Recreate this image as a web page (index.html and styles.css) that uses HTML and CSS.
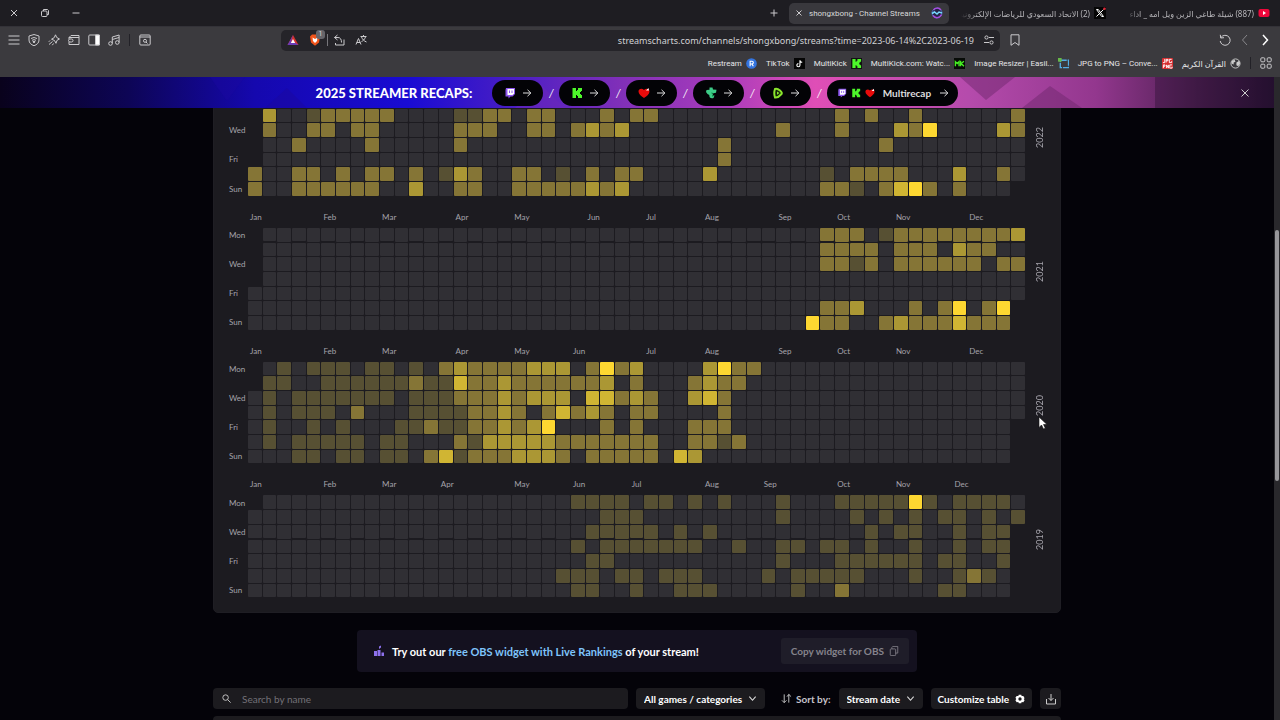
FILE: index.html
```html
<!DOCTYPE html>
<html lang="en">
<head>
<meta charset="utf-8">
<title>shongxbong - Channel Streams</title>
<link rel="stylesheet" href="styles.css">
</head>
<body>
<svg class="defs" aria-hidden="true">
  <symbol id="arrow" viewBox="0 0 10 10"><path d="M1 5h8M5.500 1.800 8.800 5 5.500 8.200" fill="none" stroke="#ddd" stroke-width="1"/></symbol>
  <symbol id="twitch" viewBox="0 0 12 12"><path d="M2 1h9v6L8.500 9.500H6.500L4.500 11.500V9.500H1.500V3z" fill="#8d55ee"/><path d="M3.500 2h6.500v4.500L8.500 8H3.500z" fill="#fff"/><path d="M5.500 3.500v2.500M8 3.500v2.500" stroke="#8d55ee"/></symbol>
  <symbol id="kick" viewBox="0 0 12 12"><path d="M1.500 1h3.500v3h1V3h1V1h4v3h-1v1H9v2h1v1h1v3H7V9H6V8H5v3H1.500z" fill="#4df82a"/></symbol>
  <symbol id="heart" viewBox="0 0 12 12"><path d="M6 11C3 9 .5 7 .5 4.500.5 1.500 4 .8 6 3c2-2.200 5.500-1.500 5.500 1.500C11.500 7 9 9 6 11z" fill="#e90b0b"/><path d="M8 3.500 10.500 1l.5 2.500z" fill="#fff"/></symbol>
  <symbol id="chevron" viewBox="0 0 10 10"><path d="m1.500 3 3.500 4 3.500-4" fill="none" stroke="#ddd" stroke-width="1.200"/></symbol>
</svg>

<header class="browser">
  <div class="tabstrip">
    <div class="window-controls">
      <button aria-label="Close window"><svg viewBox="0 0 12 12"><path d="m3 3 6 6M9 3 3 9"/></svg></button>
      <button aria-label="Restore window"><svg viewBox="0 0 12 12"><rect x="2.500" y="4" width="5.500" height="5.500" rx="1"/><path d="M4.500 4V2.500h4l1 1v4H8"/></svg></button>
      <button aria-label="Minimize window"><svg viewBox="0 0 12 12"><path d="M2.500 6h7"/></svg></button>
    </div>
    <button class="new-tab" aria-label="New tab"><svg viewBox="0 0 12 12"><path d="M6 2.500v7M2.500 6h7"/></svg></button>
    <div class="tab active">
      <button aria-label="Close tab"><svg viewBox="0 0 12 12"><path d="m3.500 3.500 5 5M8.500 3.500l-5 5"/></svg></button>
      <span class="tab-title">shongxbong - Channel Streams</span>
      <svg class="fav" viewBox="0 0 12 12"><circle cx="6" cy="6" r="5" fill="#252447" stroke="#4567b8"/><path d="M2.500 3C4 .6 8 .4 10 3M2 8.500c2 3 6.500 3 8.500-1" stroke="#a74bdc" fill="none" stroke-width="1.500"/><path d="m1 6.500 2.500-1.500L6 7l2-2 3 1" stroke="#77d9ff" fill="none" stroke-width="1.500"/></svg>
    </div>
    <div class="tab">
      <span class="tab-title rtl" dir="rtl">(2) الاتحاد السعودي للرياضات الإلكترونية</span>
      <svg class="fav" viewBox="0 0 12 12"><path d="M0 0h12v12H0z" fill="#050505"/><path d="M2.500 2.500h1.800l5.200 7H7.700zM9.500 2.500l-7 7" fill="none" stroke="#fff"/><circle cx="10.500" cy="1.800" r="1.300" fill="#df2638"/></svg>
    </div>
    <div class="tab">
      <span class="tab-title rtl" dir="rtl">(887) شيلة طاغي الزين ويل امه _ اداء</span>
      <svg class="fav" viewBox="0 0 12 12"><rect x=".5" y="2" width="11" height="8" rx="2" fill="#ef073b"/><path d="m5 4 3 2-3 2z" fill="#fff"/></svg>
    </div>
  </div>

  <div class="toolbar">
    <div class="tools">
      <button aria-label="Menu"><svg viewBox="0 0 12 12"><path d="M.5 2h11M.5 6h11M.5 10h11"/></svg></button>
      <button aria-label="VPN"><svg viewBox="0 0 12 12"><path d="M6 .5 11 2v4c0 3-2 4.500-5 5.800C3 10.500 1 9 1 6V2zM3 4.500q3-2 6 0M4 6.300q2-1.300 4 0"/><path d="M5 7.500h2L6 9z" fill="#ccc"/></svg></button>
      <button aria-label="Leo"><svg viewBox="0 0 12 12"><path d="m7.500.8 1.200 2.700L11.500 5 9 6.300 8 9.300 6.500 6.500 3.500 5.200l2.700-1.500zM4.500 7.500l-3.500 3M2 6.500.8 7.800M5.500 9.500l-1.200 1.700"/></svg></button>
      <button aria-label="Wallet"><svg viewBox="0 0 12 12"><path d="M1 5V3.500l2-2h8v9H1V8M1 3.500h10"/><rect x=".5" y="5" width="4.500" height="3" rx="1.500"/></svg></button>
      <button aria-label="Sidebar"><svg viewBox="0 0 12 12"><rect x=".8" y="1" width="10.400" height="10" rx="1"/><path d="M7.500 1h4v10h-4z" fill="#fff"/></svg></button>
      <button aria-label="Playlist"><svg viewBox="0 0 12 12"><circle cx="2.500" cy="9.500" r="1.800"/><circle cx="9.300" cy="8.500" r="1.800"/><path d="M4.300 9.500V3l6.800-2v7.500M4.300 5.500l6.800-2"/></svg></button>
      <span class="divider"></span>
      <button aria-label="Search tabs"><svg viewBox="0 0 12 12"><rect x=".8" y="1" width="10.400" height="10" rx="1"/><path d="M.8 3h10.400M7 8l1.500 1.500"/><circle cx="6" cy="6.800" r="1.500"/></svg></button>
    </div>
    <div class="address">
      <button aria-label="Rewards"><svg viewBox="0 0 12 12"><path d="M6 1 11.500 11H.5z" fill="#d6312c" stroke="none"/><path d="M6 1 .5 11h11L8 8.500H4z" fill="#6a3bb6" stroke="none"/><path d="M6 5 8.200 9H3.800z" fill="#fff" stroke="none"/></svg></button>
      <button class="shields" aria-label="Shields"><svg viewBox="0 0 12 12"><path d="M3 .5h6l2 2-1 6-4 3.300-4-3.300-1-6z" fill="#f2541b" stroke="none"/><path d="M3.500 3.500 6 5l2.500-1.500L8 7 6 9 4 7z" fill="#fff" stroke="none"/></svg><span class="count">1</span></button>
      <span class="divider light"></span>
      <button aria-label="Share"><svg viewBox="0 0 12 12"><path d="M4.500 1 1.500 3.500l3 2.500M1.500 3.500H5c2.500 0 3.500 2 3.500 5M11 5.500V11H2.500V9"/></svg></button>
      <button aria-label="Translate"><svg viewBox="0 0 12 12"><path d="m1 10.500 2.500-6 2.500 6M1.800 8.500h3.500M5.500 2.500h6M8.500 1v1.500M6.500 3c1 2.500 2.500 4 5 5M10.500 3C9.500 5.500 8 7 6.500 7.500"/></svg></button>
      <input type="text" aria-label="Address" value="streamscharts.com/channels/shongxbong/streams?time=2023-06-14%2C2023-06-19">
      <button aria-label="Site settings"><svg viewBox="0 0 12 12"><circle cx="3.500" cy="3.500" r="1.600"/><circle cx="8.500" cy="8.500" r="1.600"/><path d="M6 3.500h5M1 8.500h5"/></svg></button>
    </div>
    <div class="nav">
      <button aria-label="Bookmark"><svg viewBox="0 0 12 12"><path d="M2 .8h8v10.500L6 8.500l-4 2.800z"/></svg></button>
      <span class="grow"></span>
      <button aria-label="Reload"><svg viewBox="0 0 12 12"><path d="M2 3.500A5 5 0 1 1 1.200 7M1.300.8 1.700 4l3.300-.3"/></svg></button>
      <button class="dim" aria-label="Forward"><svg viewBox="0 0 12 12"><path d="M8 1 3.500 6 8 11"/></svg></button>
      <button class="strong" aria-label="Back"><svg viewBox="0 0 12 12"><path d="m4 1 4.500 5L4 11"/></svg></button>
    </div>
  </div>

  <nav class="bookmarks">
    <a href="#">Restream<svg viewBox="0 0 12 12"><circle cx="6" cy="6" r="5.800" fill="#3374df"/><path d="M4.500 9V3.500h2q1.500 0 1.500 1.500t-1.500 1.500h-2M6.500 6.500 8 9" stroke="#fff" fill="none" stroke-width="1.200"/></svg></a>
    <a href="#">TikTok<svg viewBox="0 0 12 12"><path d="M0 0h12v12H0z" fill="#050505"/><path d="M6.500 2.500v5.300a1.700 1.700 0 1 1-1.700-1.700M6.500 2.500q.5 2 2.500 2.200" stroke="#fff" fill="none" stroke-width="1.200"/></svg></a>
    <a href="#">MultiKick<svg viewBox="0 0 12 12"><path d="M0 0h12v12H0z" fill="#111"/><use href="#kick" width="12" height="12"/></svg></a>
    <a href="#">MultiKick.com: Watc...<svg viewBox="0 0 12 12"><path d="M0 0h12v12H0z" fill="#070b07"/><path d="M1.500 9V4L3.500 6 5.500 4v5M7.200 3v6M10.800 3.500 8 6l2.800 3" fill="none" stroke="#45ed22" stroke-width="1.500"/></svg></a>
    <a href="#">Image Resizer | Easil...<svg viewBox="0 0 12 12"><path d="M2.500 2.500h9v8h-9z" fill="none" stroke="#53aee4" stroke-width="1.500" stroke-dasharray="7 1"/><path d="M0 0h4v4H0z" fill="#67b748"/></svg></a>
    <a href="#">JPG to PNG – Conve...<svg viewBox="0 0 12 12"><rect width="12" height="12" rx="1" fill="#d63032"/><path d="M1 5h2V1M4.500 5V1.500h2V3h-2M10.500 1.500H8V5h2.500V3.500M1.500 11V7.500h1.700V9H1.500M5 11V7.500L7 11V7.500M11 7.500H8.500V11H11V9.500" stroke="#fff" fill="none"/></svg></a>
    <a href="#" class="arabic" lang="ar">القرآن الكريم<svg viewBox="0 0 12 12"><circle cx="6" cy="6" r="5" fill="none" stroke="#ccc"/><path d="m2 3 3-1 1 2-2 1v2L1.500 6M7 5l3-2 1 3-2 3-2-1z" fill="#ccc"/></svg></a>
    <span class="divider"></span>
    <button aria-label="All bookmarks"><svg viewBox="0 0 12 12"><rect x=".8" y=".8" width="4" height="4" rx="1"/><rect x="7.200" y=".8" width="4" height="4" rx="1"/><rect x=".8" y="7.200" width="4" height="4" rx="1"/><rect x="7.200" y="7.200" width="4" height="4" rx="1"/></svg></button>
  </nav>
</header>

<div class="viewport">
  <div class="page">
    <section class="banner">
      <svg class="banner-art" viewBox="0 0 1274 31" preserveAspectRatio="none"><path d="M210 0h35l-18 24zM265 31l22-20 20 20z" fill="#1a079f" opacity=".5"/><path d="M515 31l25-24 25 24z" fill="#6b28ba" opacity=".5"/><path d="M960 0h55l-29 23zM1022 31l28-22 32 22z" fill="#6f286e" opacity=".5"/><path d="M1155 0h119v31h-119z" fill="#180b20" opacity=".3"/></svg>
      <h2>2025 STREAMER RECAPS:</h2>
      <a class="pill" href="#" aria-label="Twitch"><svg><use href="#twitch"/></svg><svg class="arr"><use href="#arrow"/></svg></a><i>/</i>
      <a class="pill" href="#" aria-label="Kick"><svg><use href="#kick"/></svg><svg class="arr"><use href="#arrow"/></svg></a><i>/</i>
      <a class="pill" href="#" aria-label="Love"><svg><use href="#heart"/></svg><svg class="arr"><use href="#arrow"/></svg></a><i>/</i>
      <a class="pill" href="#" aria-label="Trovo"><svg viewBox="0 0 12 12"><path d="M4.500.5h3l.5 2 3.500.2-.5 3-2.700.5-.8 2 2 .3-1 2.500C6 12 4 10.500 4.300 8L2.500 7 1 5l.5-2 3-.3z" fill="#3dcc87"/><path d="m6.500 6 1.500.5M7 9l2-.5" stroke="#073"/></svg><svg class="arr"><use href="#arrow"/></svg></a><i>/</i>
      <a class="pill" href="#" aria-label="Rumble"><svg viewBox="0 0 12 12"><path d="M3 2Q5 1 8 3.500t1 4Q6 11 3 10.500 1.500 6 3 2z" fill="#132208" stroke="#8ae52c" stroke-width="2"/><path d="M5 4.500 7.500 6 5 7.700z" fill="#8ae52c"/></svg><svg class="arr"><use href="#arrow"/></svg></a><i>/</i>
      <a class="pill multi" href="#"><svg><use href="#twitch" width="10" height="10"/></svg><svg><use href="#kick" width="10" height="10"/></svg><svg><use href="#heart" width="10" height="10"/></svg><span>Multirecap</span><svg class="arr"><use href="#arrow"/></svg></a>
      <button class="dismiss" aria-label="Close banner"><svg viewBox="0 0 12 12"><path d="m2.500 2.500 7 7M9.500 2.500l-7 7"/></svg></button>
    </section>

    <main>
      <section class="heatmaps" id="heatmaps"></section>

      <section class="widget">
        <svg class="podium" viewBox="0 0 12 12"><path d="M1 6h3v5H1zM4.500 5h3v6h-3zM8.500 7.500H11V11H8.500z" fill="#8d71ed"/><path d="M6 1.500 8 .5v2L6 4z" fill="#8d71ed"/></svg>
        <p>Try out our <a href="#">free OBS widget with Live Rankings</a> of your stream!</p>
        <button>Copy widget for OBS<svg viewBox="0 0 12 12"><rect x="1.500" y="3.500" width="6.500" height="8" rx="1"/><path d="M3.500 3.500v-2l1-1h6v8H8"/></svg></button>
      </section>

      <form class="filters">
        <label class="search"><svg viewBox="0 0 12 12"><circle cx="5" cy="5" r="3"/><path d="m7.200 7.200 3.300 3.300"/></svg><input type="search" placeholder="Search by name" aria-label="Search by name"></label>
        <span class="select"><select aria-label="Category"><option>All games / categories</option></select><svg><use href="#chevron"/></svg></span>
        <label class="sort" for="sort"><svg viewBox="0 0 12 12"><path d="M3.500 1.500v9M1 8l2.500 2.500L6 8M8.500 10.500v-9M6.500 4l2-2.500L11 4"/></svg>Sort by:</label>
        <span class="select"><select id="sort"><option>Stream date</option></select><svg><use href="#chevron"/></svg></span>
        <button type="button" class="custom">Customize table<svg viewBox="0 0 12 12"><path d="m4.500 1 3 0 .5 1.500 2 0L11.500 5 10.500 6l1 1.500-1.500 2.300-2-.3L7.500 11h-3L4 9.500l-2 .3L.5 7.500l1-1.500-1-1.500L2 2.500h2zM6 4a2 2 0 1 0 0 4 2 2 0 0 0 0-4z" fill="#fff" fill-rule="evenodd"/></svg></button>
        <button type="button" class="download" aria-label="Download"><svg viewBox="0 0 12 12"><path d="M6 1v6.500M3.500 5 6 7.500 8.500 5M1.500 6v5h9V6"/></svg></button>
      </form>
      <div class="table-top"></div>
    </main>
  </div>
  <div class="scrollbar"><div class="thumb"></div></div>
</div>
<svg class="cursor" viewBox="0 0 10 14"><path d="M1 1v10.500L3.500 9 5.500 13l1.800-.8L5.500 8.500H9z" fill="#fff" stroke="#111" stroke-width=".6"/></svg>
<script src="heatmap.js"></script>
</body>
</html>
```
FILE: styles.css
```css
* { box-sizing: border-box; }
body {
  margin: 0;
  height: 100vh;
  display: flex;
  flex-direction: column;
  overflow: hidden;
  background: #040309;
  color: #fff;
  font-family: "Lato", "Liberation Sans", sans-serif;
  font-size: 10px;
}
button, input, select { font: inherit; color: inherit; border: 0; background: none; padding: 0; margin: 0; outline: 0; }
button { display: flex; align-items: center; justify-content: center; }
a { color: inherit; text-decoration: none; }
svg { width: 12px; height: 12px; flex: none; }
.defs { position: absolute; width: 0; height: 0; }

/* browser chrome */
.browser { flex: none; background: #3b3a3e; font-family: "Roboto", "DejaVu Sans", sans-serif; color: #d8d8da; }
.browser button svg { fill: none; stroke: #cbcacd; stroke-width: 1; }
.tabstrip { height: 27px; padding: 0 3px 0 4px; display: flex; align-items: center; background: #1e1d22; border-bottom: 1px solid #333238; }
.window-controls { display: flex; flex: 1; gap: 11px; }
.window-controls button { width: 20px; height: 20px; }
.new-tab { width: 20px; height: 20px; margin-right: 5px; }
.tab { width: 164px; height: 21px; padding: 0 7px 0 12px; display: flex; align-items: center; gap: 4px; }
.tab.active { width: 160px; padding: 0 6px 0 4px; background: #39383d; border-radius: 5px; }
.tab-title { flex: 1; min-width: 0; overflow: hidden; white-space: nowrap; font-size: 8px; }
.tab-title.rtl { color: #b5b4b8; font-family: "Noto Sans", "DejaVu Sans", sans-serif; -webkit-mask-image: linear-gradient(90deg, transparent, #000 16px); mask-image: linear-gradient(90deg, transparent, #000 16px); }
.toolbar { display: grid; grid-template-columns: 281fr 719fr 280fr; align-items: center; height: 26px; }
.tools { display: flex; align-items: center; gap: 8px; padding-left: 8px; }
.divider { width: 1px; height: 12px; background: #222127; margin: 0 1px; }
.divider.light { background: #77767b; margin: 0; }
.address { display: flex; align-items: center; height: 21px; padding: 0 5px 0 6px; background: #252429; border-radius: 5px; }
.address button { margin-right: 10px; }
.address .shields { position: relative; margin-right: 6px; }
.address .divider + button { margin-left: 5px; }
.address input { flex: 1; text-align: right; font-family: "Noto Sans", sans-serif; font-size: 9px; color: #d2d2d5; margin-right: 9px; min-width: 0; }
.address button:last-child { margin-right: 0; }
.count { position: absolute; left: 7px; top: -4px; width: 9px; height: 9px; border-radius: 3px; background: #66656b; font-size: 7px; line-height: 9px; }
.nav { display: flex; align-items: center; gap: 8px; padding: 0 9px; }
.grow { flex: 1; }
.browser .dim svg { stroke: #88878b; }
.browser .strong svg { stroke: #fff; stroke-width: 1.500; }
.bookmarks { display: flex; justify-content: flex-end; align-items: center; gap: 9px; height: 24px; padding: 0 8px 4px; font-size: 8px; white-space: nowrap; color: #e6e6e8; }
.bookmarks .divider { margin: 0; }
.bookmarks a { display: flex; align-items: center; gap: 4px; }
.bookmarks a svg { width: 11px; height: 11px; }
.bookmarks .arabic { font-family: "Noto Sans", "DejaVu Sans", sans-serif; }

/* page */
.viewport { flex: 1; min-height: 0; display: flex; }
.page { flex: 1; min-width: 0; overflow: hidden; }
.banner {
  position: relative;
  z-index: 1;
  height: 31px;
  display: flex;
  align-items: center;
  justify-content: center;
  background: linear-gradient(90deg, #09021c 0%, #0d0555 10%, #1508ae 20%, #190bd3 32%, #421bc6 39%, #8230b8 49%, #aa3cbb 57%, #df4eb6 64%, #b54bac 76%, #93378e 86%, #502054 94%, #2a1235 100%);
}
.banner-art { position: absolute; inset: 0; width: 100%; height: 100%; z-index: -1; }
.banner h2 { margin: 0 20px 0 0; font-size: 13px; font-weight: 900; white-space: nowrap; }
.banner i { width: 16px; text-align: center; font-size: 11px; }
.pill { width: 51px; height: 26px; border-radius: 13px; background: #030306; display: flex; align-items: center; justify-content: center; gap: 6px; }
.pill .arr { width: 10px; height: 10px; }
.pill.multi { width: 131px; gap: 4px; color: #ddd; font-weight: 700; }
.multi svg { width: 10px; height: 10px; }
.multi span { margin: 0 4px; }
.dismiss { position: absolute; right: 23px; top: 10px; }
button svg, .search svg, .sort svg { fill: none; stroke: #ccc; }

main { width: 848px; max-width: 100%; margin: -47px auto 0; }
.heatmaps { padding: 13px 0 15px 15px; background: #1c1b20; border: 1px solid #1f1e24; border-radius: 5px; display: flex; flex-direction: column; gap: 13px; color: #a5a3ab; font-size: 8px; }
.year { display: grid; grid-template-columns: 19px 1fr 35px; row-gap: 3px; }
.months { grid-column: 2; display: grid; grid-template-columns: repeat(53, minmax(0, 1fr)); column-gap: 1px; height: 16px; line-height: 16px; }
.months span { padding-left: 2px; white-space: nowrap; grid-row: 1; }
.days { grid-column: 1; grid-row: 2; display: grid; grid-template-rows: repeat(7, 1fr); align-items: center; }
.cells { grid-column: 2; grid-row: 2; display: grid; grid-template-columns: repeat(53, minmax(0, 1fr)); gap: 1px; }
.cells b { aspect-ratio: 1; border-radius: 1px; }
.l0 { background: #302f34; }
.l1 { background: #575033; }
.l2 { background: #857536; }
.l3 { background: #ab9734; }
.l4 { background: #d0b533; }
.l5 { background: #fdd731; }
.year-label { grid-column: 3; grid-row: 1 / 3; writing-mode: vertical-rl; transform: rotate(180deg); justify-self: center; align-self: center; margin: 5px 6px 0 0; font-size: 9px; }

.widget { width: 560px; max-width: 100%; height: 42px; margin: 17px auto 16px; padding: 0 8px 0 16px; display: flex; align-items: center; background: #14111f; border-radius: 4px; }
.widget p { flex: 1; margin: 0 0 0 7px; font-size: 11px; font-weight: 700; }
.widget a { color: #7fc4fb; }
.widget button { height: 26px; padding: 0 10px; gap: 5px; border-radius: 3px; background: #1f1d29; color: #85838c; font-weight: 700; }
.widget button svg { width: 10px; height: 10px; stroke: #85838c; }
.filters { display: flex; align-items: center; gap: 8px; height: 21px; font-weight: 700; white-space: nowrap; }
.filters > * { height: 21px; border-radius: 4px; background: #1c1b1f; }
.search { flex: 1; min-width: 0; display: flex; align-items: center; padding: 0 8px; gap: 10px; }
.search svg { width: 11px; height: 11px; }
.search input { flex: 1; min-width: 0; font-weight: 400; }
.search input::placeholder { color: #737177; }
.select { display: flex; align-items: center; padding: 0 8px; gap: 5px; }
.select select { appearance: none; }
.select svg { width: 9px; height: 9px; }
.filters .sort { display: flex; align-items: center; gap: 4px; background: none; padding-left: 8px; color: #c6c4ca; }
.sort svg { width: 11px; height: 11px; }
.custom { padding: 0 7px; gap: 6px; }
.custom svg { width: 10px; height: 10px; stroke: none; }
.download { width: 21px; }
.table-top { height: 12px; margin-top: 7px; border-radius: 4px; background: #1c1b1f; }

.scrollbar { width: 6px; background: #29282c; }
.thumb { height: 39%; margin: 153px 1px 0; border-radius: 3px; background: #97969a; }
.cursor { position: absolute; left: 1038px; top: 416px; width: 10px; height: 14px; }
```
FILE: heatmap.js
```js
// Each row is a weekday; entries are "level:columns", start/end give the weekdays of 1 January and 31 December.
const MONTHS = ["Jan", "Feb", "Mar", "Apr", "May", "Jun", "Jul", "Aug", "Sep", "Oct", "Nov", "Dec"];
const DAYS = ["Mon", "", "Wed", "", "Fri", "", "Sun"];
const YEARS = [
  { year: 2022, start: 5, end: 5, months: [], rows: [
    "",
    "3:1 1:4,14,15 2:5-9,16,17,19,20,24,26,27,40,42,45,52",
    "2:1,4,5,7,8,14-16,19,20,22,24,36,40,45,52 3:23,25,44,51 5:46",
    "2:3,8,14,32,43",
    "2:32",
    "2:0,3,4,6,8,9,11,15,18,19,23,25,26,41-44,51 1:13,21,39 3:14,31,48",
    "2:0,3-8,14,15,18-22,24,39,40,43,46,48 3:11,23,25 1:41 4:44 5:45" ] },
  { year: 2021, start: 4, end: 4, months: [0, 5, 9, 14, 18, 23, 27, 31, 36, 40, 44, 49], rows: [
    "2:39-41,44-51 1:43 3:52",
    "2:39-42,44-46,49,50 3:48",
    "2:39,40,42,44-49,51,52 1:41",
    "",
    "",
    "2:39,40,45,47,50 3:41 5:48,51",
    "5:38 2:39,40,43,45-47,49-51 3:44 4:48" ] },
  { year: 2020, start: 2, end: 3, months: [0, 5, 9, 14, 18, 22, 27, 31, 36, 40, 44, 49], rows: [
    "1:2,4-6,8,9,11 2:13,15-18,23,25,33,34 3:14,19-21,26,31 5:24,32",
    "1:1,2,5-10,12,13 2:11,15,16,18-23,26,30,32,33 3:17,24,31 4:14",
    "1:1,3-9,11-13 2:14-16,18,25,27,32 3:17,19-21,26,30 4:23,24,31",
    "1:1,3-5,11-14 2:7,15,16,18,20,22,24,26,27,32 3:17,23 4:21",
    "1:1,4,6,10,11,13,14 2:12,15,16,18,24,26,30-32 3:17,19 5:20",
    "1:1,3-7,9,10,15,32 2:14,21-27,30,31,33 3:16-20",
    "1:3,4,6,7,9,10,14 2:12,15-17,21,23-27 3:18-20,30 4:13,29" ] },
  { year: 2019, start: 1, end: 1, months: [0, 5, 9, 13, 18, 22, 26, 31, 35, 40, 44, 48], rows: [
    "1:22-25,27,28,30,32,36,40-44,46,48-51 5:45",
    "1:24-26,36,41,43,45,47,48,50,52",
    "1:23-27,29,31,42,44,45,48,50,51",
    "1:22,24-30,33,36,37,39,40,42,45,48,50,51",
    "1:23,24,36,40-45,47,48,51",
    "1:21-23,25,26,28-30,35,37-41,45,48,50 2:49",
    "1:22,23,26,29-31,37,47,48 2:40" ] }
];

function parseRow(text) {
  const levels = new Array(53).fill(0);
  text.split(" ").filter(Boolean).forEach(part => {
    const [level, columns] = part.split(":");
    columns.split(",").forEach(range => {
      const [from, to = from] = range.split("-").map(Number);
      for (let c = from; c <= to; c++) levels[c] = Number(level);
    });
  });
  return levels;
}

document.getElementById("heatmaps").innerHTML = YEARS.map(y => {
  const months = y.months.map((column, i) => `<span style="grid-column:${column + 1}">${MONTHS[i]}</span>`).join("");
  const days = DAYS.map((d, i) => `<span>${y.year === 2022 && i === 0 ? "" : d}</span>`).join("");
  const cells = y.rows.map((row, d) => parseRow(row).map((level, c) => {
    const outside = (c === 0 && d < y.start) || (c === 52 && d > y.end);
    return `<b class="${outside ? "" : "l" + level}"></b>`;
  }).join("")).join("");
  return `<div class="year"><div class="months">${months}</div><div class="days">${days}</div><div class="cells">${cells}</div><div class="year-label">${y.year}</div></div>`;
}).join("");
```
